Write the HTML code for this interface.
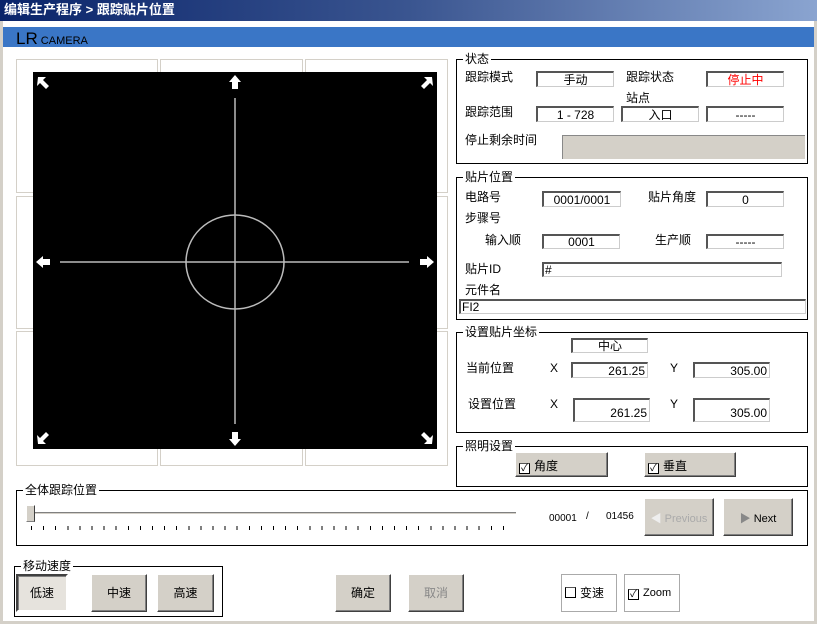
<!DOCTYPE html><html><head><meta charset="utf-8"><style>
*{box-sizing:border-box;margin:0;padding:0}
body{width:817px;height:624px;position:relative;background:#fff;font-family:"Liberation Sans","Noto Sans CJK SC",sans-serif;font-size:12px;color:#000;overflow:hidden}
.a{position:absolute}
.t{position:absolute;white-space:nowrap;line-height:14px}
.f{position:absolute;background:#fff;border-top:2px solid #555;border-left:2px solid #555;border-right:1px solid #ccc;border-bottom:1px solid #ccc;text-align:center;font-size:12px;line-height:12px;white-space:nowrap;overflow:hidden}
.g{position:absolute;border:1px solid #000}
.g>.l{position:absolute;top:-8px;left:6px;background:#fff;padding:0 2px;line-height:14px;font-size:12px}
.c{position:absolute;border:1px solid #d4d0c8}
.b{position:absolute;background:#d4d0c8;border:1px solid;border-color:#fff #404040 #404040 #fff;box-shadow:inset -1px -1px #808080;text-align:center;font-size:12px}
.cb{display:inline-block;width:11px;height:11px;border:1px solid #000;border-top-color:#555;vertical-align:-1px;margin-right:4px;background:#fff;font-size:10px;line-height:9px;text-align:center}
</style></head><body>
<div class="a" style="left:0;top:0;width:817px;height:21px;background:linear-gradient(90deg,#0a246a,#3a5590 50%,#8aa4d0);"></div>
<div class="t" style="left:4px;top:3px;color:#fff;font-weight:bold;font-size:13px">编辑生产程序 &gt; 跟踪贴片位置</div>
<div class="a" style="left:0;top:21px;width:3px;height:603px;background:#d4d0c8"></div>
<div class="a" style="right:0;top:21px;width:3px;height:603px;background:#d4d0c8"></div>
<div class="a" style="left:0;bottom:0;width:817px;height:3px;background:#d4d0c8"></div>
<div class="a" style="left:3px;top:27px;width:811px;height:20px;background:#3a76c6"></div>
<div class="t" style="left:16px;top:30px;font-size:17px;line-height:17px">LR<span style="font-size:11px"> CAMERA</span></div>

<div class="c" style="left:16px;top:59px;width:142px;height:134px"></div>
<div class="c" style="left:160px;top:59px;width:143px;height:134px"></div>
<div class="c" style="left:305px;top:59px;width:143px;height:134px"></div>
<div class="c" style="left:16px;top:196px;width:142px;height:133px"></div>
<div class="c" style="left:305px;top:196px;width:143px;height:133px"></div>
<div class="c" style="left:16px;top:331px;width:142px;height:135px"></div>
<div class="c" style="left:160px;top:331px;width:143px;height:135px"></div>
<div class="c" style="left:305px;top:331px;width:143px;height:135px"></div>
<svg class="a" style="left:33px;top:72px" width="404" height="377" viewBox="0 0 404 377">
<rect width="404" height="377" fill="#000"/>
<g stroke="#bbb" stroke-width="1.5" fill="none"><line x1="202" y1="26" x2="202" y2="352"/><line x1="27" y1="190" x2="376" y2="190"/><ellipse cx="202" cy="190" rx="49" ry="47"/></g>
<g fill="#fff">
<path d="M202 3 l6 7 h-3 v7 h-6 v-7 h-3z"/><path d="M202 374 l6 -7 h-3 v-7 h-6 v7 h-3z"/>
<path d="M3 190 l7 -6 v3 h7 v6 h-7 v3z"/><path d="M401 190 l-7 -6 v3 h-7 v6 h7 v3z"/>
<path d="M5 5 h8 l-3 3 l6 6 l-3 3 l-6 -6 l-3 3z"/><path d="M399 5 h-8 l3 3 l-6 6 l3 3 l6 -6 l3 3z"/>
<path d="M5 372 h8 l-3 -3 l6 -6 l-3 -3 l-6 6 l-3 -3z"/><path d="M399 372 h-8 l3 -3 l-6 -6 l3 -3 l6 6 l3 -3z"/>
</g></svg>

<div class="g" style="left:456px;top:59px;width:352px;height:105px"><span class="l">状态</span></div>
<div class="t" style="left:465px;top:70px">跟踪模式</div>
<div class="f" style="left:536px;top:71px;width:78px;height:16px;padding-top:1px">手动</div>
<div class="t" style="left:626px;top:70px">跟踪状态</div>
<div class="f" style="left:706px;top:71px;width:78px;height:16px;color:#f00;padding-top:1px">停止中</div>
<div class="t" style="left:626px;top:91px">站点</div>
<div class="t" style="left:465px;top:105px">跟踪范围</div>
<div class="f" style="left:536px;top:106px;width:78px;height:16px;padding-top:1px">1 - 728</div>
<div class="f" style="left:621px;top:106px;width:78px;height:16px;padding-top:1px">入口</div>
<div class="f" style="left:706px;top:106px;width:78px;height:16px;padding-top:1px">-----</div>
<div class="t" style="left:465px;top:133px">停止剩余时间</div>
<div class="a" style="left:562px;top:135px;width:243px;height:24px;background:#d4d0c8;border-top:1px solid #888;border-left:1px solid #888"></div>

<div class="g" style="left:456px;top:177px;width:352px;height:143px"><span class="l">贴片位置</span></div>
<div class="t" style="left:465px;top:190px">电路号</div>
<div class="f" style="left:542px;top:191px;width:79px;height:16px;padding-top:1px">0001/0001</div>
<div class="t" style="left:648px;top:190px">贴片角度</div>
<div class="f" style="left:706px;top:191px;width:78px;height:16px;padding-top:1px">0</div>
<div class="t" style="left:465px;top:211px">步骤号</div>
<div class="t" style="left:485px;top:233px">输入顺</div>
<div class="f" style="left:542px;top:234px;width:78px;height:15px">0001</div>
<div class="t" style="left:655px;top:233px">生产顺</div>
<div class="f" style="left:706px;top:234px;width:78px;height:15px">-----</div>
<div class="t" style="left:465px;top:262px">贴片ID</div>
<div class="f" style="left:542px;top:262px;width:240px;height:15px;text-align:left;padding-left:1px">#</div>
<div class="t" style="left:465px;top:283px">元件名</div>
<div class="f" style="left:459px;top:299px;width:347px;height:15px;text-align:left;padding-left:1px">FI2</div>

<div class="g" style="left:456px;top:332px;width:352px;height:101px"><span class="l">设置贴片坐标</span></div>
<div class="f" style="left:571px;top:338px;width:77px;height:15px">中心</div>
<div class="t" style="left:466px;top:361px">当前位置</div>
<div class="t" style="left:550px;top:361px">X</div>
<div class="f" style="left:571px;top:362px;width:77px;height:16px;text-align:right;padding:1px 2px 0 0">261.25</div>
<div class="t" style="left:670px;top:361px">Y</div>
<div class="f" style="left:693px;top:362px;width:77px;height:16px;text-align:right;padding:1px 2px 0 0">305.00</div>
<div class="t" style="left:468px;top:397px">设置位置</div>
<div class="t" style="left:550px;top:397px">X</div>
<div class="f" style="left:573px;top:398px;width:77px;height:24px;text-align:right;padding:7px 2px 0 0">261.25</div>
<div class="t" style="left:670px;top:397px">Y</div>
<div class="f" style="left:693px;top:398px;width:77px;height:24px;text-align:right;padding:7px 2px 0 0">305.00</div>

<div class="g" style="left:456px;top:446px;width:352px;height:41px"><span class="l">照明设置</span></div>
<div class="b" style="left:515px;top:452px;width:93px;height:25px;text-align:left;padding:4px 0 0 3px"><span class="cb">✓</span>角度</div>
<div class="b" style="left:644px;top:452px;width:92px;height:25px;text-align:left;padding:4px 0 0 3px"><span class="cb">✓</span>垂直</div>

<div class="g" style="left:16px;top:490px;width:792px;height:56px"><span class="l">全体跟踪位置</span></div>
<div class="a" style="left:30px;top:512px;width:486px;height:3px;border-top:1px solid #808080;border-bottom:1px solid #fff;background:#d4d0c8"></div>
<div class="a" style="left:26px;top:505px;width:9px;height:17px;background:#d4d0c8;border:1px solid;border-color:#fff #404040 #808080 #fff"></div>
<div class="a" style="left:31px;top:526px;width:484px;height:4px;background:repeating-linear-gradient(90deg,#000 0 1px,transparent 1px 12.1px)"></div>
<div class="t" style="left:549px;top:512px;font-size:10px">00001</div>
<div class="t" style="left:586px;top:510px;font-size:10px">/</div>
<div class="t" style="left:606px;top:510px;font-size:10px">01456</div>
<div class="b" style="left:644px;top:498px;width:70px;height:38px;color:#fff;padding-top:11px;font-size:11px"><span style="color:#eee">◀</span> <span style="color:#aaa">Previous</span></div>
<div class="b" style="left:723px;top:498px;width:70px;height:38px;padding-top:11px;font-size:11px"><span style="color:#888">▶</span> Next</div>

<div class="g" style="left:14px;top:566px;width:209px;height:51px"><span class="l">移动速度</span></div>
<div class="b" style="left:16px;top:574px;width:52px;height:38px;line-height:34px;border:2px solid;border-color:#404040 #fff #fff #404040;box-shadow:inset 1px 1px #808080;background:#e6e3dd">低速</div>
<div class="b" style="left:91px;top:574px;width:56px;height:38px;line-height:36px">中速</div>
<div class="b" style="left:157px;top:574px;width:57px;height:38px;line-height:36px">高速</div>
<div class="b" style="left:335px;top:574px;width:56px;height:38px;line-height:36px">确定</div>
<div class="b" style="left:408px;top:574px;width:56px;height:38px;line-height:36px;color:#888">取消</div>
<div class="a" style="left:561px;top:574px;width:56px;height:38px;border:1px solid #aaa;line-height:36px;padding-left:3px"><span class="cb"></span>变速</div>
<div class="a" style="left:624px;top:574px;width:56px;height:38px;border:1px solid #aaa;line-height:36px;padding-left:3px;font-size:11px"><span class="cb">✓</span>Zoom</div>
</body></html>
